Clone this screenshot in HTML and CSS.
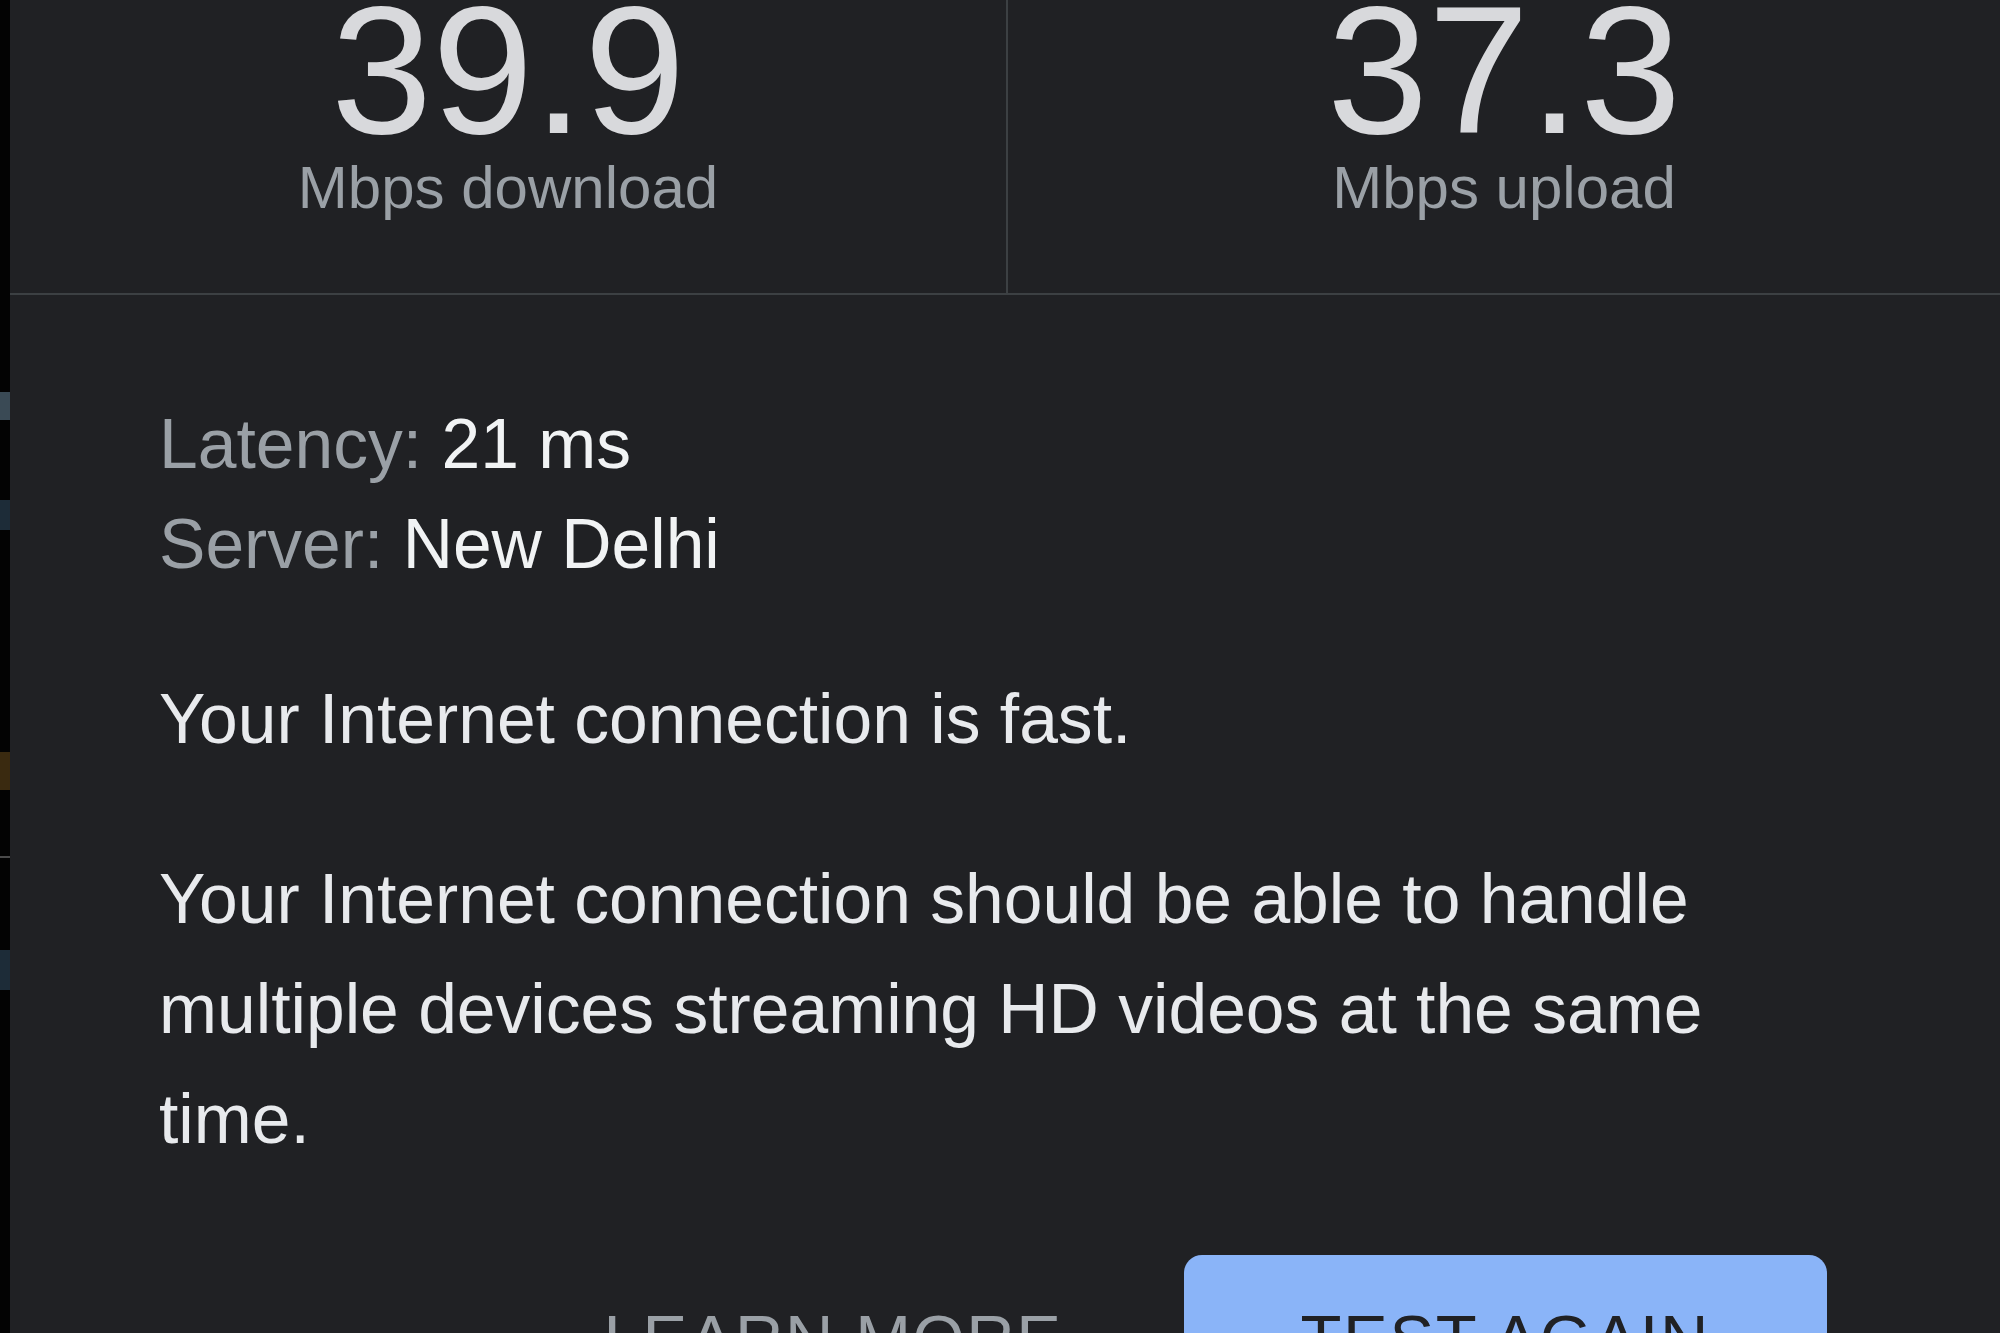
FILE: index.html
```html
<!DOCTYPE html>
<html lang="en">
<head>
<meta charset="utf-8">
<title>Internet speed test</title>
<link rel="stylesheet" href="styles.css">
</head>
<body>
<div class="backdrop-strip"></div>
<main class="panel">
  <section class="stats">
    <div class="stat stat-download">
      <div class="stat-num">39.9</div>
      <div class="stat-unit">Mbps download</div>
    </div>
    <div class="stat stat-upload">
      <div class="stat-num">37.3</div>
      <div class="stat-unit">Mbps upload</div>
    </div>
  </section>
  <section class="details">
    <div class="info">
      <div class="info-row"><span class="info-key">Latency:</span> <span class="info-val">21 ms</span></div>
      <div class="info-row"><span class="info-key">Server:</span> <span class="info-val">New Delhi</span></div>
    </div>
    <p class="verdict">Your Internet connection is fast.</p>
    <p class="verdict">Your Internet connection should be able to handle multiple devices streaming HD videos at the same time.</p>
    <div class="actions">
      <button class="btn btn-text" type="button">Learn more</button>
      <button class="btn btn-filled" type="button">Test again</button>
    </div>
  </section>
</main>
</body>
</html>
```
FILE: styles.css
```css
* {
  box-sizing: border-box;
}

html, body {
  margin: 0;
  padding: 0;
}

body {
  display: flex;
  width: 2000px;
  height: 1333px;
  overflow: hidden;
  background: #000;
  font-family: "Liberation Sans", Arial, sans-serif;
}

.backdrop-strip {
  flex: 0 0 10px;
  background-color: #030303;
  background-image:
    linear-gradient(to bottom,
      transparent 392px, #3a4a55 392px, #3a4a55 420px, transparent 420px,
      transparent 500px, #1d2c38 500px, #1d2c38 530px, transparent 530px,
      transparent 752px, #3a2a10 752px, #3a2a10 790px, transparent 790px,
      transparent 856px, #4a4a4a 856px, #4a4a4a 858px, transparent 858px,
      transparent 950px, #1d2c38 950px, #1d2c38 990px, transparent 990px);
}

.panel {
  flex: 1 1 auto;
  background: #202124;
  color: #e8eaed;
}

.stats {
  display: grid;
  grid-template-columns: 998px 1fr;
  margin-top: -12px;
  border-bottom: 2px solid #3c4043;
}

.stat {
  text-align: center;
  padding-bottom: 69px;
}

.stat-download {
  border-right: 2px solid #3c4043;
}

.stat-num {
  font-size: 182px;
  line-height: 164px;
  color: #d8d9dc;
  font-weight: 400;
}

.stat-unit {
  font-size: 60px;
  line-height: 72px;
  color: #9aa0a6;
}

.details {
  padding: 99px 0 0 149px;
  width: 1817px;
}

.info {
  font-size: 69.6px;
  line-height: 100px;
}

.info-key {
  color: #9aa0a6;
}

.info-val {
  color: #f1f3f4;
}

.verdict {
  margin: 70px 0 0;
  font-size: 69.6px;
  line-height: 110px;
  color: #e8eaed;
}

.actions {
  display: flex;
  justify-content: flex-end;
  gap: 4px;
  margin-top: 81px;
}

.btn {
  display: block;
  height: 162px;
  padding: 6px 117px 0;
  border: 0;
  border-radius: 18px;
  font-family: "Liberation Sans", Arial, sans-serif;
  font-size: 67px;
  line-height: 156px;
  letter-spacing: 1.6px;
  font-weight: 500;
  text-transform: uppercase;
  cursor: pointer;
}

.btn-text {
  background: transparent;
  color: #9aa0a6;
}

.btn-filled {
  background: #8ab4f8;
  color: #202124;
}
```
